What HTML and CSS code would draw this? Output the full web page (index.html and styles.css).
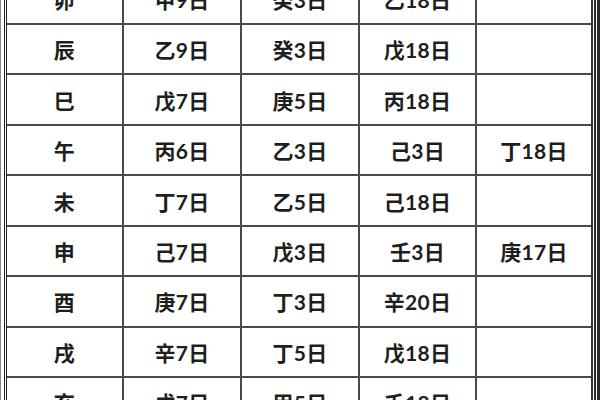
FILE: index.html
```html
<!DOCTYPE html>
<html lang="zh">
<head>
<meta charset="utf-8">
<link rel="stylesheet" href="styles.css">
</head>
<body>
<div class="frame">
  <div class="sheet">
    <div class="grid">
      <div class="c">卯</div><div class="c">甲9日</div><div class="c">癸3日</div><div class="c">乙18日</div><div class="c"></div>
      <div class="c">辰</div><div class="c">乙9日</div><div class="c">癸3日</div><div class="c">戊18日</div><div class="c"></div>
      <div class="c">巳</div><div class="c">戊7日</div><div class="c">庚5日</div><div class="c">丙18日</div><div class="c"></div>
      <div class="c">午</div><div class="c">丙6日</div><div class="c">乙3日</div><div class="c">己3日</div><div class="c">丁18日</div>
      <div class="c">未</div><div class="c">丁7日</div><div class="c">乙5日</div><div class="c">己18日</div><div class="c"></div>
      <div class="c">申</div><div class="c">己7日</div><div class="c">戊3日</div><div class="c">壬3日</div><div class="c">庚17日</div>
      <div class="c">酉</div><div class="c">庚7日</div><div class="c">丁3日</div><div class="c">辛20日</div><div class="c"></div>
      <div class="c">戌</div><div class="c">辛7日</div><div class="c">丁5日</div><div class="c">戊18日</div><div class="c"></div>
      <div class="c">亥</div><div class="c">戊7日</div><div class="c">甲5日</div><div class="c">壬18日</div><div class="c"></div>
    </div>
  </div>
</div>
</body>
</html>
```
FILE: styles.css
```css
html, body {
  margin: 0;
  padding: 0;
  background: #fff;
}
body {
  width: 600px;
  height: 400px;
  overflow: hidden;
}
.frame {
  height: 400px;
  border-left: 1px solid #8a8a8a;
  border-right: 3px solid #2a2a2a;
  padding-left: 3px;
  padding-right: 1px;
  overflow: hidden;
  box-sizing: border-box;
}
.sheet {
  height: 100%;
  border-left: 3px double #222;
  border-right: 2px solid #2a2a2a;
  padding-right: 1px;
  overflow: hidden;
}
.grid {
  display: grid;
  grid-template-columns: 115px 116px 116px 115px 114px;
  grid-auto-rows: 48.43px;
  gap: 2px;
  background: #4a4a4a;
  border-right: 2px solid #333;
  margin-top: -25.4px;
}
.c {
  background: #fff;
  display: flex;
  align-items: center;
  justify-content: center;
  font-family: "Lato", "Noto Sans CJK SC", sans-serif;
  font-weight: 700;
  font-size: 21px;
  letter-spacing: 0.3px;
  color: #1e1e1e;
}
```
